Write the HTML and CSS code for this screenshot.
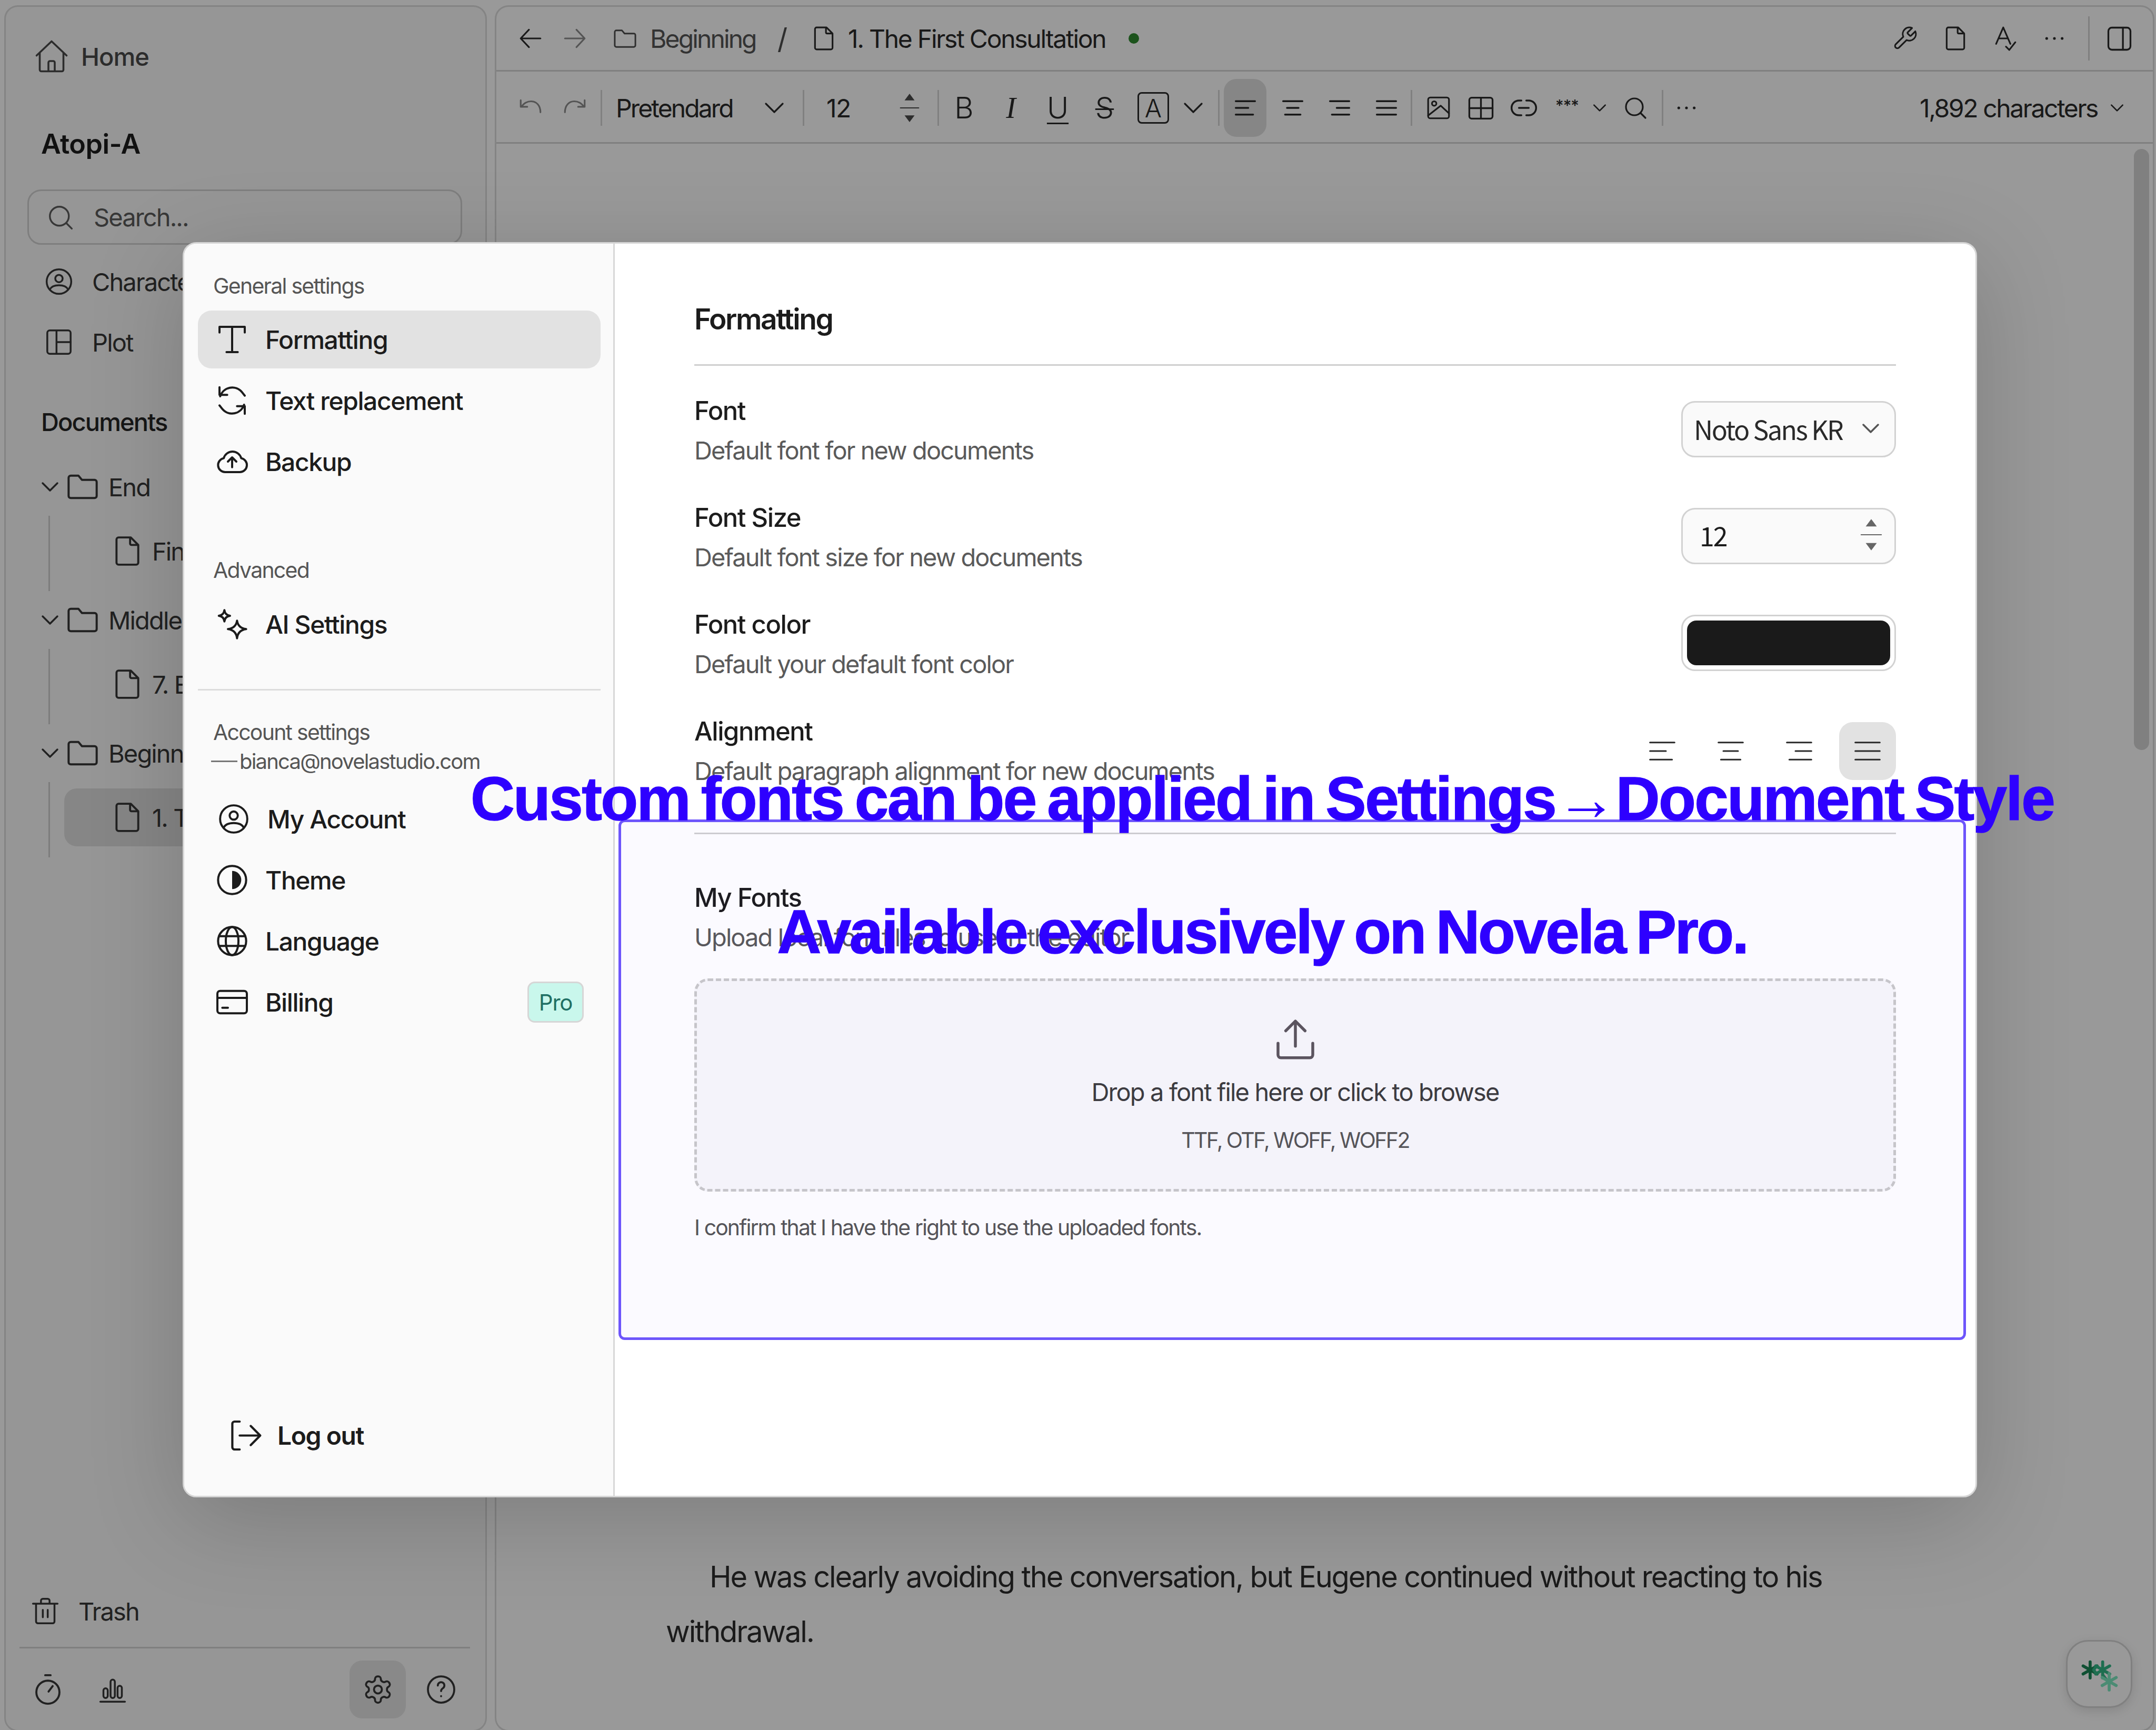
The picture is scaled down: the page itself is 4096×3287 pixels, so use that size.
FILE: index.html
```html
<!DOCTYPE html>
<html lang="en">
<head>
<meta charset="utf-8">
<title>Novela settings</title>
<link rel="stylesheet" href="styles.css">
</head>
<body>
<svg class="defs" aria-hidden="true">
  <symbol id="home" viewBox="0 0 24 24"><path d="M2.500 11.500 12 2.500l9.500 9M4.500 10v10.500a1 1 0 0 0 1 1h13a1 1 0 0 0 1-1V10M10 21.500V16a1 1 0 0 1 1-1h2a1 1 0 0 1 1 1v5.500"/></symbol>
  <symbol id="search" viewBox="0 0 24 24"><circle cx="11" cy="11" r="8"/><path d="m17 17 4.500 4.500"/></symbol>
  <symbol id="user" viewBox="0 0 24 24"><circle cx="12" cy="12" r="10"/><circle cx="12" cy="9.500" r="3"/><path d="M4.500 18.500c1.500-3 4.500-3.500 7.500-3.500s6 .5 7.500 3.500"/></symbol>
  <symbol id="plot" viewBox="0 0 24 24"><rect x="2.500" y="2.500" width="19" height="19" rx="2"/><path d="M10 2.500v19M10 12h11.500"/></symbol>
  <symbol id="chev" viewBox="0 0 24 24"><path d="m4 8 8 8 8-8"/></symbol>
  <symbol id="folder" viewBox="0 0 24 24"><path d="M2 5.500a1.500 1.500 0 0 1 1.500-1.500H9l2.500 3h9A1.500 1.500 0 0 1 22 8.500v10a1.500 1.500 0 0 1-1.500 1.500h-17A1.500 1.500 0 0 1 2 18.500z"/></symbol>
  <symbol id="file" viewBox="0 0 24 24"><path d="M6 2h8.500L20 7.500V20.500a1.500 1.500 0 0 1-1.500 1.500h-13A1.500 1.500 0 0 1 4 20.500v-17A1.500 1.500 0 0 1 5.500 2zM14 2v4.500a1 1 0 0 0 1 1h5"/></symbol>
  <symbol id="back" viewBox="0 0 24 24"><path d="M21 12H3M10.500 4 3 12l7.500 8"/></symbol>
  <symbol id="forward" viewBox="0 0 24 24"><path d="M3 12h18M13.500 4 21 12l-7.500 8"/></symbol>
  <symbol id="undo" viewBox="0 0 24 24"><path d="M3 5v6h6M3.500 11C6 7.500 9 6 12.500 6c5 0 8.500 4 8.500 10"/></symbol>
  <symbol id="redo" viewBox="0 0 24 24"><path d="M21 5v6h-6M20.500 11C18 7.500 15 6 11.500 6 6.500 6 3 10 3 16"/></symbol>
  <symbol id="al" viewBox="0 0 24 24"><path d="M2 5h20M2 12h13M2 19h18"/></symbol>
  <symbol id="ac" viewBox="0 0 24 24"><path d="M2 5h20M6 12h12M4 19h16"/></symbol>
  <symbol id="ar" viewBox="0 0 24 24"><path d="M2 5h20M9 12h13M4 19h18"/></symbol>
  <symbol id="aj" viewBox="0 0 24 24"><path d="M2 5h20M2 12h20M2 19h20"/></symbol>
  <symbol id="image" viewBox="0 0 24 24"><rect x="2.500" y="2.500" width="19" height="19" rx="2"/><circle cx="8" cy="8" r="2"/><path d="M2.500 19 14 10l7.500 7"/></symbol>
  <symbol id="table" viewBox="0 0 24 24"><rect x="2" y="3" width="20" height="18" rx="2"/><path d="M12 3v18M2 12h20"/></symbol>
  <symbol id="link" viewBox="0 0 24 24"><path d="M10 6H8a6 6 0 0 0 0 12h2M14 6h2a6 6 0 0 1 0 12h-2M8 12h8"/></symbol>
  <symbol id="wrench" viewBox="0 0 24 24"><path d="M14.700 6.300a1 1 0 0 0 0 1.400l1.600 1.600a1 1 0 0 0 1.400 0l3.770-3.770a6 6 0 0 1-7.940 7.940l-6.910 6.910a2.120 2.120 0 0 1-3-3l6.910-6.910a6 6 0 0 1 7.940-7.940l-3.760 3.760z"/></symbol>
  <symbol id="panel" viewBox="0 0 24 24"><rect x="2.500" y="2.500" width="19" height="19" rx="3"/><path d="M15 2.500v19"/></symbol>
  <symbol id="serif-t" viewBox="0 0 24 24"><path d="M3 7V3h18v4M12 3v18M8 21h8"/></symbol>
  <symbol id="refresh" viewBox="0 0 24 24"><path d="M20.500 15a9 9 0 0 1-15.500 3l-2-2.500M3.500 9a9 9 0 0 1 15.500-3l2 2.500M3 2.500v5.500h5.500M21 21.500V16h-5.500"/></symbol>
  <symbol id="cloud" viewBox="0 0 24 24"><path d="M7 19.500a5 5 0 0 1-1-9.900 6.500 6.500 0 0 1 12.500 0 5 5 0 0 1-1 9.900zM12 16v-6.500M9 12l3-3 3 3"/></symbol>
  <symbol id="spark" viewBox="0 0 24 24"><path d="M15.500 9.500c.5 3.500 2.500 5.500 6.500 6-4 .5-6 2.500-6.500 6.500-.5-4-2.500-6-6.500-6.500 4-.5 6-2.500 6.500-6zM6.500 2c.3 2.500 1.500 3.700 4 4-2.500.3-3.700 1.500-4 4-.3-2.500-1.500-3.700-4-4 2.500-.3 3.700-1.500 4-4z"/></symbol>
  <symbol id="theme" viewBox="0 0 24 24"><circle cx="12" cy="12" r="10"/><path class="solid" d="M12 5.500a6.500 6.500 0 0 1 0 13z"/></symbol>
  <symbol id="globe" viewBox="0 0 24 24"><circle cx="12" cy="12" r="10"/><ellipse cx="12" cy="12" rx="4.500" ry="10"/><path d="M2.800 8.500h18.400M2.800 15.500h18.400"/></symbol>
  <symbol id="card" viewBox="0 0 24 24"><rect x="1.500" y="4" width="21" height="16" rx="2"/><path d="M1.500 9h21M5 16h4"/></symbol>
  <symbol id="logout" viewBox="0 0 24 24"><path d="M8 2.500H4.500a1.500 1.500 0 0 0-1.500 1.500v16a1.500 1.500 0 0 0 1.500 1.500H8M8 12h14M15.500 5.500 22 12l-6.500 6.500"/></symbol>
  <symbol id="trash" viewBox="0 0 24 24"><path d="M2 6h20M4.500 6v14.500a1.500 1.500 0 0 0 1.500 1.500h12a1.500 1.500 0 0 0 1.500-1.500V6M8.500 6V3.500A1.500 1.500 0 0 1 10 2h4a1.500 1.500 0 0 1 1.500 1.500V6M10 11v6M14 11v6"/></symbol>
  <symbol id="timer" viewBox="0 0 24 24"><path d="M10 1.500h4M12.500 13.500l3-4"/><circle cx="12" cy="14" r="8.500"/></symbol>
  <symbol id="chart" viewBox="0 0 24 24"><path d="M2 22h20"/><rect x="4.500" y="11" width="3.500" height="8" rx="1.750"/><rect x="10.300" y="4" width="3.500" height="15" rx="1.750"/><rect x="16" y="9" width="3.500" height="10" rx="1.750"/></symbol>
  <symbol id="gear" viewBox="0 0 24 24"><path d="M12.220 2h-.44a2 2 0 0 0-2 2v.18a2 2 0 0 1-1 1.730l-.43.250a2 2 0 0 1-2 0l-.15-.08a2 2 0 0 0-2.730.730l-.22.380a2 2 0 0 0 .730 2.730l.15.100a2 2 0 0 1 1 1.720v.510a2 2 0 0 1-1 1.740l-.15.090a2 2 0 0 0-.730 2.730l.22.380a2 2 0 0 0 2.730.730l.15-.08a2 2 0 0 1 2 0l.43.250a2 2 0 0 1 1 1.730V20a2 2 0 0 0 2 2h.44a2 2 0 0 0 2-2v-.18a2 2 0 0 1 1-1.730l.43-.25a2 2 0 0 1 2 0l.15.08a2 2 0 0 0 2.730-.73l.22-.39a2 2 0 0 0-.73-2.730l-.15-.08a2 2 0 0 1-1-1.740v-.5a2 2 0 0 1 1-1.740l.15-.09a2 2 0 0 0 .73-2.730l-.22-.38a2 2 0 0 0-2.730-.73l-.15.08a2 2 0 0 1-2 0l-.43-.25a2 2 0 0 1-1-1.730V4a2 2 0 0 0-2-2z"/><circle cx="12" cy="12" r="3"/></symbol>
  <symbol id="help" viewBox="0 0 24 24"><circle cx="12" cy="12" r="10"/><path d="M9.500 9a2.500 2.500 0 1 1 3.800 2.100c-.8.500-1.300 1-1.300 2.100M12 17v.1"/></symbol>
  <symbol id="upload" viewBox="0 0 24 24"><path d="M12 15.500V2.500M7 7.500l5-5 5 5M3 14v6a1.500 1.500 0 0 0 1.500 1.500h15A1.500 1.500 0 0 0 21 20v-6"/></symbol>
  <symbol id="stepper" viewBox="0 0 24 40"><path class="solid" d="M12 3l6 8H6zM12 37l6-8H6z"/><path d="M1 20h22"/></symbol>
  <symbol id="dots" viewBox="0 0 24 24"><circle class="solid" cx="4" cy="12" r="1.400"/><circle class="solid" cx="12" cy="12" r="1.400"/><circle class="solid" cx="20" cy="12" r="1.400"/></symbol>
  <symbol id="spell" viewBox="0 0 24 24"><path d="M3 17 9.500 2 16 17M5.200 12h8.600M12 19.500l3 3 5.500-7"/></symbol>
</svg>

<div class="app">
  <aside class="side">
    <div class="side-home"><svg class="ic ic-72"><use href="#home"/></svg><span>Home</span></div>
    <div class="side-project">Atopi-A</div>
    <div class="side-search"><svg class="ic ic-54"><use href="#search"/></svg><span>Search...</span></div>
    <div class="side-link"><svg class="ic ic-56"><use href="#user"/></svg><span>Characters</span></div>
    <div class="side-link"><svg class="ic ic-56"><use href="#plot"/></svg><span>Plot</span></div>
    <div class="side-docs">Documents</div>
    <div class="tree">
      <div class="tree-folder"><svg class="ic ic-42"><use href="#chev"/></svg><svg class="ic ic-64"><use href="#folder"/></svg><span>End</span></div>
      <div class="tree-kids"><div class="tree-file"><svg class="ic ic-62"><use href="#file"/></svg><span>Final Chapter</span></div></div>
      <div class="tree-folder"><svg class="ic ic-42"><use href="#chev"/></svg><svg class="ic ic-64"><use href="#folder"/></svg><span>Middle</span></div>
      <div class="tree-kids"><div class="tree-file"><svg class="ic ic-62"><use href="#file"/></svg><span>7. Eugene</span></div></div>
      <div class="tree-folder"><svg class="ic ic-42"><use href="#chev"/></svg><svg class="ic ic-64"><use href="#folder"/></svg><span>Beginning</span></div>
      <div class="tree-kids"><div class="tree-file is-on"><svg class="ic ic-62"><use href="#file"/></svg><span>1. The First Consultation</span></div></div>
    </div>
    <div class="side-foot">
      <div class="side-trash"><svg class="ic ic-56"><use href="#trash"/></svg><span>Trash</span></div>
      <div class="side-tools">
        <span class="tool tool-timer"><svg class="ic ic-62"><use href="#timer"/></svg></span>
        <span class="tool tool-chart"><svg class="ic ic-56"><use href="#chart"/></svg></span>
        <span class="tool tool-gear"><svg class="ic ic-60"><use href="#gear"/></svg></span>
        <span class="tool tool-help"><svg class="ic ic-60"><use href="#help"/></svg></span>
      </div>
    </div>
  </aside>

  <main class="editor">
    <header class="ed-head">
      <span class="cell w84"><svg class="ic ic-50"><use href="#back"/></svg></span>
      <span class="cell w84 dim"><svg class="ic ic-50"><use href="#forward"/></svg></span>
      <svg class="ic ic-47 crumb-folder"><use href="#folder"/></svg>
      <span class="crumb crumb-a">Beginning</span>
      <span class="crumb crumb-slash">/</span>
      <svg class="ic ic-50 crumb-file"><use href="#file"/></svg>
      <span class="crumb crumb-b">1. The First Consultation</span>
      <i class="status"></i>
      <div class="head-right">
        <span class="cell w96"><svg class="ic ic-50"><use href="#wrench"/></svg></span>
        <span class="cell w96"><svg class="ic ic-50"><use href="#file"/></svg></span>
        <span class="cell w96"><svg class="ic ic-50"><use href="#spell"/></svg></span>
        <span class="cell w88"><svg class="ic ic-44"><use href="#dots"/></svg></span>
        <i class="vsep vsep-tall"></i>
        <span class="cell w112"><svg class="ic ic-53"><use href="#panel"/></svg></span>
      </div>
    </header>
    <div class="ed-tools">
      <span class="cell w84 dim"><svg class="ic ic-50"><use href="#undo"/></svg></span>
      <span class="cell w84 dim"><svg class="ic ic-50"><use href="#redo"/></svg></span>
      <i class="vsep m7"></i>
      <span class="tb-font"><span>Pretendard</span><svg class="ic ic-48"><use href="#chev"/></svg></span>
      <i class="vsep m30"></i>
      <span class="tb-size"><span>12</span><svg class="ic tb-step"><use href="#stepper"/></svg></span>
      <i class="vsep m31"></i>
      <span class="cell w89 m3 glyph">B</span>
      <span class="cell w89 glyph glyph-i">I</span>
      <span class="cell w89 glyph glyph-u">U</span>
      <span class="cell w89 glyph glyph-s">S</span>
      <span class="cell w96 glyph"><b class="glyph-a">A</b></span>
      <span class="cell w56"><svg class="ic ic-48"><use href="#chev"/></svg></span>
      <i class="vsep m19"></i>
      <span class="cell tb-active"><svg class="ic ic-44"><use href="#al"/></svg></span>
      <span class="cell w89 m5"><svg class="ic ic-44"><use href="#ac"/></svg></span>
      <span class="cell w89"><svg class="ic ic-44"><use href="#ar"/></svg></span>
      <span class="cell w89"><svg class="ic ic-44"><use href="#aj"/></svg></span>
      <i class="vsep m2"></i>
      <span class="cell w81 m9"><svg class="ic ic-50"><use href="#image"/></svg></span>
      <span class="cell w81"><svg class="ic ic-53"><use href="#table"/></svg></span>
      <span class="cell w81"><svg class="ic ic-56"><use href="#link"/></svg></span>
      <span class="cell w84 tb-stars">***</span>
      <span class="cell w40"><svg class="ic ic-32"><use href="#chev"/></svg></span>
      <span class="cell w96"><svg class="ic ic-48"><use href="#search"/></svg></span>
      <i class="vsep m2"></i>
      <span class="cell w88"><svg class="ic ic-44"><use href="#dots"/></svg></span>
      <span class="tb-count"><span>1,892 characters</span><svg class="ic ic-32"><use href="#chev"/></svg></span>
    </div>
    <div class="ed-body">
      <i class="scroll-thumb"></i>
      <p class="ed-text">He was clearly avoiding the conversation, but Eugene continued without reacting to his withdrawal.</p>
      <div class="assist">
        <svg class="assist-mark" viewBox="0 0 126 126">
          <g class="ast ast-1"><path d="M45 39v32M31 47l28 16M59 47 31 63"/></g>
          <g class="ast ast-2"><path d="M70 39v32M56 47l28 16M84 47 56 63"/><path d="M58 63 52 55 58 47M70 65l8 10"/></g>
          <g class="ast ast-3"><path d="M83 62v33M69 70l28 16M97 70 69 86"/></g>
        </svg>
      </div>
    </div>
  </main>
</div>

<div class="backdrop"></div>

<section class="modal">
  <nav class="m-nav">
    <div class="m-head m-head-first">General settings</div>
    <div class="m-item is-on"><svg class="ic ic-64"><use href="#serif-t"/></svg><span>Formatting</span></div>
    <div class="m-item"><svg class="ic ic-64"><use href="#refresh"/></svg><span>Text replacement</span></div>
    <div class="m-item"><svg class="ic ic-64"><use href="#cloud"/></svg><span>Backup</span></div>
    <div class="m-head m-head-adv">Advanced</div>
    <div class="m-item"><svg class="ic ic-64"><use href="#spark"/></svg><span>AI Settings</span></div>
    <hr class="m-rule">
    <div class="m-head m-head-acc">Account settings</div>
    <div class="m-mail"><i></i>bianca@novelastudio.com</div>
    <div class="m-item m-item-user"><svg class="ic ic-62"><use href="#user"/></svg><span>My Account</span></div>
    <div class="m-item"><svg class="ic ic-64"><use href="#theme"/></svg><span>Theme</span></div>
    <div class="m-item"><svg class="ic ic-64"><use href="#globe"/></svg><span>Language</span></div>
    <div class="m-item"><svg class="ic ic-64"><use href="#card"/></svg><span>Billing</span><em class="pro">Pro</em></div>
    <div class="m-item m-logout"><svg class="ic ic-67"><use href="#logout"/></svg><span>Log out</span></div>
  </nav>
  <div class="m-main">
    <h2 class="m-title">Formatting</h2>
    <div class="row">
      <div><div class="r-label">Font</div><div class="r-desc">Default font for new documents</div></div>
      <div class="ctl ctl-select"><span>Noto Sans KR</span><svg class="ic ic-42"><use href="#chev"/></svg></div>
    </div>
    <div class="row">
      <div><div class="r-label">Font Size</div><div class="r-desc">Default font size for new documents</div></div>
      <div class="ctl ctl-num"><span>12</span><svg class="ic ctl-step"><use href="#stepper"/></svg></div>
    </div>
    <div class="row">
      <div><div class="r-label">Font color</div><div class="r-desc">Default your default font color</div></div>
      <div class="ctl ctl-color"><i></i></div>
    </div>
    <div class="row row-last">
      <div><div class="r-label">Alignment</div><div class="r-desc">Default paragraph alignment for new documents</div></div>
      <div class="aligns">
        <span><svg class="ic ic-56"><use href="#al"/></svg></span>
        <span><svg class="ic ic-56"><use href="#ac"/></svg></span>
        <span><svg class="ic ic-56"><use href="#ar"/></svg></span>
        <span class="is-on"><svg class="ic ic-56"><use href="#aj"/></svg></span>
      </div>
    </div>
    <div class="fonts">
      <div class="r-label">My Fonts</div>
      <div class="r-desc">Upload local font files to use in the editor.</div>
      <div class="drop">
        <svg class="ic drop-ic"><use href="#upload"/></svg>
        <div class="drop-a">Drop a font file here or click to browse</div>
        <div class="drop-b">TTF, OTF, WOFF, WOFF2</div>
      </div>
      <div class="confirm">I confirm that I have the right to use the uploaded fonts.</div>
    </div>
  </div>
</section>

<div class="callout-box"></div>
<div class="callout-text"><div class="callout-a">Custom fonts can be applied in Settings <span class="arrow">→</span> Document Style</div><div class="callout-b">Available exclusively on Novela Pro.</div></div>
</body>
</html>
```

FILE: styles.css
```css
* { box-sizing: border-box; }
html, body { margin: 0; padding: 0; }
body {
  position: relative;
  width: 4096px;
  height: 3287px;
  overflow: hidden;
  background: #fff;
  font-family: Inter, "Noto Sans", sans-serif;
  letter-spacing: -0.02em;
  color: #2a2a2a;
}
.defs { position: absolute; width: 0; height: 0; }
.ic { fill: none; stroke: currentColor; stroke-width: 1.5; stroke-linecap: round; stroke-linejoin: round; flex: none; overflow: visible; }
.solid { fill: currentColor; stroke: none; }
.ic-32 { width: 32px; height: 32px; stroke-width: 2; }
.ic-42 { width: 42px; height: 42px; stroke-width: 2; }
.ic-44 { width: 44px; height: 44px; stroke-width: 1.9; }
.ic-47 { width: 47px; height: 47px; }
.ic-48 { width: 48px; height: 48px; stroke-width: 1.6; }
.ic-50 { width: 50px; height: 50px; }
.ic-53 { width: 53px; height: 53px; }
.ic-54 { width: 54px; height: 54px; }
.ic-56 { width: 56px; height: 56px; }
.ic-60 { width: 60px; height: 60px; }
.ic-62 { width: 62px; height: 62px; }
.ic-64 { width: 64px; height: 64px; }
.ic-67 { width: 67px; height: 67px; }
.ic-72 { width: 72px; height: 72px; stroke-width: 1.2; }

.app { display: flex; gap: 15px; padding: 10px 3px 0 8px; height: 3290px; }

/* sidebar */
.side {
  width: 917px; flex: none;
  display: flex; flex-direction: column;
  background: #fafafa;
  border: 3px solid #dcdcdc; border-radius: 26px;
  padding: 54px 44px 22px 41px;
  overflow: hidden;
  font-size: 47px;
  letter-spacing: -0.04em;
  color: #4a4a4a;
}
.side-home { display: flex; align-items: center; gap: 20px; height: 80px; margin-left: 10px; font-weight: 500; letter-spacing: -0.02em; }
.side-project { height: 70px; line-height: 70px; margin: 92px 0 0 26px; font-size: 52px; font-weight: 600; letter-spacing: -0.01em; color: #1d1d1d; }
.side-search {
  display: flex; align-items: center; gap: 36px;
  height: 105px; margin-top: 51px; padding-left: 33px;
  border: 3px solid #d2d2d2; border-radius: 26px;
  color: #5c5c5c;
}
.side-link { display: flex; align-items: center; gap: 35px; height: 110px; margin: 15px 0 -10px 32px; white-space: nowrap; color: #383838; }
.side-docs { height: 70px; line-height: 70px; margin: 72px 0 0 26px; font-weight: 500; color: #262626; }
.tree { margin: 33px 0 0 26px; }
.tree-folder { display: flex; align-items: center; height: 110px; margin-left: -4px; white-space: nowrap; color: #383838; }
.tree-folder .ic-64 { margin: 0 17px 0 9px; }
.tree-kids { margin-left: 14px; padding: 12px 0 21px 27px; border-left: 3px solid #cfcfcf; }
.tree-file { display: flex; align-items: center; gap: 16px; height: 110px; padding-left: 89px; border-radius: 24px; white-space: nowrap; color: #383838; }
.tree-file.is-on { background: #e0e0e0; }
.side-foot { margin-top: auto; margin-left: -4px; }
.side-trash { display: flex; align-items: center; gap: 35px; height: 80px; margin-left: 10px; color: #383838; }
.side-tools { position: relative; display: flex; align-items: center; height: 110px; margin-top: 54px; }
.side-tools::before { content: ""; position: absolute; left: -11px; right: -15px; top: -26px; border-top: 3px solid #d4d4d4; }
.tool { display: flex; align-items: center; justify-content: center; color: #383838; }
.tool-timer { margin-left: 12px; }
.tool-chart { margin-left: 64px; }
.tool-gear { width: 107px; height: 110px; margin-left: auto; border-radius: 24px; background: #e4e4e4; }
.tool-help { margin: 0 10px 0 37px; }

/* editor */
.editor { position: relative; flex: 1; display: flex; flex-direction: column; background: #fff; border: 3px solid #dcdcdc; border-radius: 26px; }
.cell { display: flex; align-items: center; justify-content: center; flex: none; }
.w40 { width: 40px; } .w56 { width: 56px; } .w81 { width: 81px; } .w84 { width: 84px; }
.w88 { width: 88px; } .w89 { width: 89px; } .w96 { width: 96px; } .w112 { width: 112px; }
.dim { color: #8c8c8c; }
.ed-head { display: flex; align-items: center; height: 123px; padding-left: 23px; border-bottom: 3px solid #d4d4d4; font-size: 48px; letter-spacing: -0.047em; color: #2a2a2a; }
.crumb { white-space: nowrap; }
.crumb-folder { margin-left: 30px; color: #4d4d4d; }
.crumb-a { margin-left: 24px; color: #555; letter-spacing: -0.06em; }
.crumb-slash { margin-left: 41px; color: #4d4d4d; font-size: 54px; }
.crumb-file { margin-left: 46px; color: #2a2a2a; }
.crumb-b { margin-left: 21px; }
.status { width: 20px; height: 20px; margin-left: 44px; border-radius: 50%; background: #2f8a2f; }
.head-right { margin-left: auto; display: flex; align-items: center; padding-right: 8px; }
.vsep { display: block; flex: none; width: 3px; height: 68px; background: #d6d6d6; }
.vsep-tall { height: 84px; margin-left: 20px; }
.m2 { margin-left: 2px; } .m3 { margin-left: 3px; } .m5 { margin-left: 5px; } .m7 { margin-left: 7px; }
.m9 { margin-left: 9px; } .m19 { margin-left: 19px; } .m30 { margin-left: 30px; } .m31 { margin-left: 31px; }
.ed-tools { display: flex; align-items: center; height: 137px; padding: 4px 52px 0 23px; border-bottom: 3px solid #d4d4d4; font-size: 48px; letter-spacing: -0.06em; color: #2a2a2a; }
.tb-font { display: flex; align-items: center; justify-content: space-between; flex: none; width: 325px; margin-left: 26px; }
.tb-size { display: flex; align-items: center; justify-content: space-between; flex: none; width: 180px; margin-left: 42px; letter-spacing: -0.03em; }
.tb-step { width: 38px; height: 64px; margin-right: 3px; color: #4a4a4a; stroke-width: 1.2; }
.glyph { font-size: 56px; font-weight: 300; letter-spacing: 0; }
.glyph-i { font-family: "Liberation Serif", serif; font-style: italic; font-weight: 400; }
.glyph-u { text-decoration: underline; text-underline-offset: 8px; text-decoration-thickness: 3px; }
.glyph-s { text-decoration: line-through; text-decoration-thickness: 3px; }
.glyph-a { display: flex; align-items: center; justify-content: center; width: 60px; height: 60px; border: 3px solid #2a2a2a; border-radius: 8px; font-weight: 300; font-size: 48px; }
.tb-active { width: 81px; height: 110px; margin-left: 8px; border-radius: 24px; background: #e0e0e0; }
.tb-stars { font-size: 30px; font-weight: 500; letter-spacing: -1px; padding-bottom: 10px; }
.tb-count { display: flex; align-items: center; gap: 21px; margin-left: auto; flex: none; white-space: nowrap; letter-spacing: -0.05em; }
.ed-body { position: relative; flex: 1; display: flex; flex-direction: column; justify-content: flex-end; padding: 0 0 135px 322px; }
.scroll-thumb { position: absolute; left: 3111px; top: 10px; width: 29px; height: 1142px; border-radius: 15px; background: #d5d5d5; }
.ed-text { width: 2300px; margin: 0; text-indent: 83px; font-size: 56px; line-height: 104px; color: #2e2e2e; letter-spacing: -0.039em; }
.assist { position: absolute; left: 2982px; bottom: 42px; width: 126px; height: 129px; border-radius: 42px; background: #fff; border: 3px solid #d6d6d6; box-shadow: 0 6px 20px rgba(0,0,0,.12); }
.assist-mark { width: 100%; height: 100%; fill: none; stroke-width: 6; stroke-linecap: round; stroke-linejoin: round; }
.ast-1 { stroke: #1a8556; }
.ast-2 { stroke: #33b886; }
.ast-3 { stroke: #7de8c0; }

.backdrop { position: absolute; inset: 0; z-index: 10; background: rgba(0,0,0,.4); }

/* modal */
.modal {
  position: absolute; z-index: 20;
  left: 347px; top: 460px; width: 3409px; height: 2385px;
  display: flex;
  background: #fff;
  border: 3px solid #d6d6d6;
  border-radius: 26px;
  overflow: hidden;
  box-shadow: 0 40px 180px rgba(0,0,0,.18);
}
.m-nav {
  width: 818px; flex: none;
  display: flex; flex-direction: column;
  padding: 53px 24px 60px 26px;
  background: #fafafa;
  border-right: 3px solid #d8d8d8;
  color: #1c1c1c;
}
.m-head { height: 55px; line-height: 55px; padding-left: 29px; font-size: 41px; letter-spacing: -0.043em; color: #555; flex: none; }
.m-head-first { margin-bottom: 19px; }
.m-head-adv { margin-top: 118px; margin-bottom: 20px; }
.m-head-acc { margin-top: 52px; }
.m-item {
  display: flex; align-items: center; gap: 31px; flex: none;
  height: 110px; margin-bottom: 6px; padding: 0 32px 0 33px;
  border-radius: 26px;
  font-size: 48px; font-weight: 500; letter-spacing: -0.03em;
}
.m-item.is-on { background: #e2e2e2; }
.m-item-user { padding-left: 37px; gap: 33px; }
.m-rule { width: 100%; flex: none; height: 3px; margin: 62px 0 0; border: 0; background: #dcdcdc; }
.m-mail { display: flex; align-items: center; height: 55px; margin-bottom: 27px; padding-left: 25px; font-size: 40px; letter-spacing: -0.045em; color: #555; flex: none; }
.m-mail i { width: 50px; height: 3px; margin-right: 4px; background: #777; }
.pro { margin-left: auto; display: flex; align-items: center; justify-content: center; width: 107px; height: 78px; border: 3px solid #d6d6d6; border-radius: 14px; background: #c9f7ec; color: #1f6f63; font-style: normal; font-weight: 400; font-size: 42px; letter-spacing: -0.03em; }
.m-logout { margin-top: auto; margin-bottom: 0; padding-left: 57px; gap: 27px; font-weight: 600; }

.m-main { flex: 1; padding: 113px 151px 0 151px; color: #1c1c1c; }
.m-title { margin: 0 0 48px; height: 119px; line-height: 60px; font-size: 55px; font-weight: 600; letter-spacing: -0.045em; border-bottom: 3px solid #cfcfcf; }
.row { display: flex; justify-content: space-between; align-items: flex-start; height: 150px; margin-bottom: 53px; }
.row-last { margin-bottom: 0; }
.r-label { height: 75px; line-height: 75px; font-size: 49px; font-weight: 500; letter-spacing: -0.03em; }
.r-desc { height: 75px; line-height: 75px; font-size: 47px; letter-spacing: -0.041em; color: #5a5a5a; white-space: nowrap; }
.ctl { display: flex; align-items: center; width: 408px; height: 107px; margin-top: 19px; border: 3px solid #d2d2d2; border-radius: 26px; background: #fafafa; font-size: 50px; }
.ctl-select { justify-content: space-between; padding: 0 24px 4px 21px; font-family: "Noto Sans CJK KR", "Noto Sans", sans-serif; color: #2a2a2a; letter-spacing: -0.05em; }
.ctl-select .ic { color: #555; stroke-width: 2; }
.ctl-num { justify-content: space-between; padding: 0 23px 5px 32px; font-family: "Noto Sans CJK KR", "Noto Sans", sans-serif; letter-spacing: -0.04em; }
.ctl-step { width: 42px; height: 72px; color: #666; stroke-width: 1.1; }
.ctl-color { padding: 8px; background: #fff; }
.ctl-color i { display: block; width: 100%; height: 100%; border-radius: 18px; background: #1a1a1a; }
.aligns { display: flex; gap: 22px; margin-top: 20px; }
.aligns span { display: flex; align-items: center; justify-content: center; width: 108px; height: 110px; border-radius: 26px; color: #2a2a2a; }
.aligns .ic { stroke-width: 1.3; }
.aligns .is-on { background: #e2e2e2; }
.fonts { margin-top: 166px; position: relative; }
.fonts::before { content: ""; position: absolute; left: 0; right: 0; top: -86px; border-top: 3px solid #cfcfcf; }
.drop {
  display: flex; flex-direction: column; align-items: center;
  height: 405px; margin-top: 41px; padding-top: 67px;
  border: 5px dashed #c9c9c9; border-radius: 26px;
  background: #f8f8fa;
  color: #454045;
}
.drop-ic { width: 88px; height: 88px; color: #5c565c; stroke-width: 1.5; }
.drop-a { margin-top: 26px; height: 60px; line-height: 60px; font-size: 47px; letter-spacing: -0.04em; color: #3c3c3c; }
.drop-b { margin-top: 31px; height: 60px; line-height: 60px; font-size: 41px; letter-spacing: -0.065em; color: #555; }
.confirm { margin-top: 38px; height: 60px; line-height: 60px; font-size: 41px; letter-spacing: -0.047em; color: #555; }

/* callout */
.callout-box { position: absolute; z-index: 30; left: 1175px; top: 1557px; width: 2560px; height: 989px; border: 5px solid #6d55fb; border-radius: 12px; background: rgba(90,60,255,.025); }
.callout-text { position: absolute; z-index: 31; left: 798px; top: 1392px; width: 3200px; text-align: center; font-family: "Liberation Sans", Arial, sans-serif; font-weight: 700; font-size: 116px; line-height: 253px; color: #2e00ff; -webkit-text-stroke: 1.5px #2e00ff; white-space: nowrap; }
.callout-a { letter-spacing: -2.6px; word-spacing: -8px; }
.callout-b { letter-spacing: -3.5px; word-spacing: -8px; }
.arrow { margin: 0 -21px; font-weight: 400; -webkit-text-stroke: 0; }
```
